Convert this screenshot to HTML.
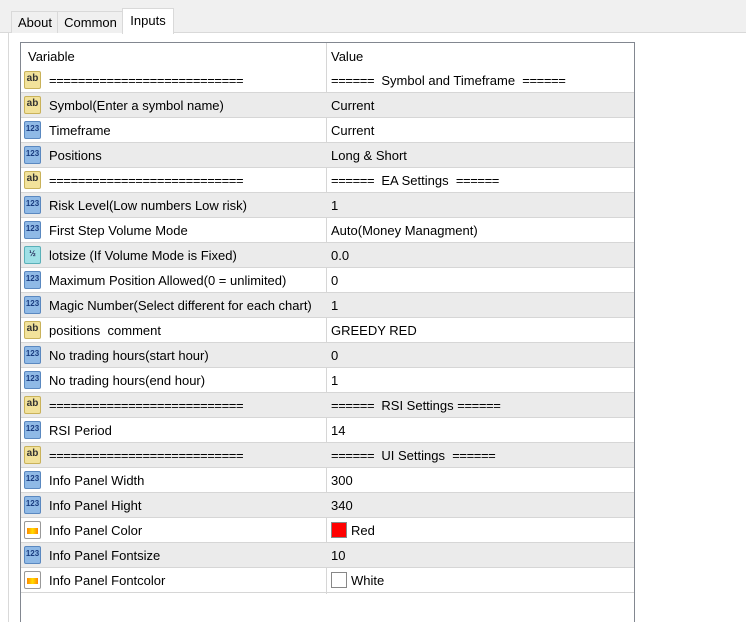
<!DOCTYPE html>
<html style="overflow:hidden"><head><style>
html,body{margin:0;width:746px;height:622px;overflow:hidden}
body{background:#fff;font-family:"Liberation Sans",sans-serif;font-size:13px;color:#000;position:relative}
.top{position:absolute;left:0;top:0;width:746px;height:32px;background:#f0f0f0;border-bottom:1px solid #d9d9d9}
.tab{position:absolute;top:11px;height:21px;line-height:21px;border:1px solid #d9d9d9;border-bottom:none;background:#f0f0f0;text-align:center}
.tab.sel{top:8px;height:25px;line-height:24px;background:#fff;z-index:2}
.lb{position:absolute;left:8px;top:33px;width:1px;height:600px;background:#d9d9d9}
.box{position:absolute;left:20px;top:42px;width:613px;height:590px;border:1px solid #828790;border-bottom:none}
.row{position:absolute;left:0;width:613px;height:24px;border-bottom:1px solid #d6d6d6}
.row.g{background:#ebebeb}
.v{position:absolute;left:28px;top:5px;white-space:nowrap}
.val{position:absolute;left:310px;top:5px;white-space:nowrap}
.eq{letter-spacing:-0.4px}
.div{position:absolute;left:305px;top:0;width:1px;height:551px;background:#d6d6d6}
.ic{position:absolute;left:3px;top:3px;width:17px;height:18px;border-radius:2px;font-size:8px;font-weight:bold;line-height:14px;text-align:center}
.ab{background:#f2e29b;border:1px solid #c9b25a;color:#333;font-size:10px;width:15px;height:16px}
.n{background:#8fb9e6;border:1px solid #5a88c0;color:#1a3c80;width:15px;height:16px}
.h{background:#9fe0e6;border:1px solid #5ab0b8;color:#225;width:15px;height:16px}
.c{background:#fff;border:1px solid #999;width:15px;height:16px}
.c:after{content:"";position:absolute;left:2px;top:6px;width:11px;height:6px;background:linear-gradient(90deg,#f80,#fd0,#f80)}
.sw{display:inline-block;width:14px;height:14px;vertical-align:-3px;margin-right:4px;border:1px solid #888}
</style></head><body>
<div class="top"></div>
<div class="tab" style="left:11px;width:46px">About</div>
<div class="tab" style="left:57px;width:65px">Common</div>
<div class="tab sel" style="left:122px;width:50px">Inputs</div>
<div class="lb"></div>
<div class="box">
<div class="row" style="top:0;height:25px;border-bottom:none"><span class="v" style="left:7px;top:6px">Variable</span><span class="val" style="top:6px">Value</span></div>
<div class="div"></div>
<div class="row" style="top:25px"><div class="ic ab">ab</div><span class="v eq">===========================</span><span class="val"><span class="eq">======</span> &nbsp;Symbol and Timeframe &nbsp;<span class="eq">======</span></span></div>
<div class="row g" style="top:50px"><div class="ic ab">ab</div><span class="v">Symbol(Enter a symbol name)</span><span class="val">Current</span></div>
<div class="row" style="top:75px"><div class="ic n">123</div><span class="v">Timeframe</span><span class="val">Current</span></div>
<div class="row g" style="top:100px"><div class="ic n">123</div><span class="v">Positions</span><span class="val">Long &amp; Short</span></div>
<div class="row" style="top:125px"><div class="ic ab">ab</div><span class="v eq">===========================</span><span class="val"><span class="eq">======</span> &nbsp;EA Settings &nbsp;<span class="eq">======</span></span></div>
<div class="row g" style="top:150px"><div class="ic n">123</div><span class="v">Risk Level(Low numbers Low risk)</span><span class="val">1</span></div>
<div class="row" style="top:175px"><div class="ic n">123</div><span class="v">First Step Volume Mode</span><span class="val">Auto(Money Managment)</span></div>
<div class="row g" style="top:200px"><div class="ic h">½</div><span class="v">lotsize (If Volume Mode is Fixed)</span><span class="val">0.0</span></div>
<div class="row" style="top:225px"><div class="ic n">123</div><span class="v">Maximum Position Allowed(0 = unlimited)</span><span class="val">0</span></div>
<div class="row g" style="top:250px"><div class="ic n">123</div><span class="v">Magic Number(Select different for each chart)</span><span class="val">1</span></div>
<div class="row" style="top:275px"><div class="ic ab">ab</div><span class="v">positions &nbsp;comment</span><span class="val">GREEDY RED</span></div>
<div class="row g" style="top:300px"><div class="ic n">123</div><span class="v">No trading hours(start hour)</span><span class="val">0</span></div>
<div class="row" style="top:325px"><div class="ic n">123</div><span class="v">No trading hours(end hour)</span><span class="val">1</span></div>
<div class="row g" style="top:350px"><div class="ic ab">ab</div><span class="v eq">===========================</span><span class="val"><span class="eq">======</span> &nbsp;RSI Settings <span class="eq">======</span></span></div>
<div class="row" style="top:375px"><div class="ic n">123</div><span class="v">RSI Period</span><span class="val">14</span></div>
<div class="row g" style="top:400px"><div class="ic ab">ab</div><span class="v eq">===========================</span><span class="val"><span class="eq">======</span> &nbsp;UI Settings &nbsp;<span class="eq">======</span></span></div>
<div class="row" style="top:425px"><div class="ic n">123</div><span class="v">Info Panel Width</span><span class="val">300</span></div>
<div class="row g" style="top:450px"><div class="ic n">123</div><span class="v">Info Panel Hight</span><span class="val">340</span></div>
<div class="row" style="top:475px"><div class="ic c"></div><span class="v">Info Panel Color</span><span class="val" style="top:4px"><span class="sw" style="background:#f00"></span>Red</span></div>
<div class="row g" style="top:500px"><div class="ic n">123</div><span class="v">Info Panel Fontsize</span><span class="val">10</span></div>
<div class="row" style="top:525px"><div class="ic c"></div><span class="v">Info Panel Fontcolor</span><span class="val" style="top:4px"><span class="sw" style="background:#fff"></span>White</span></div>
</div>
</body></html>
